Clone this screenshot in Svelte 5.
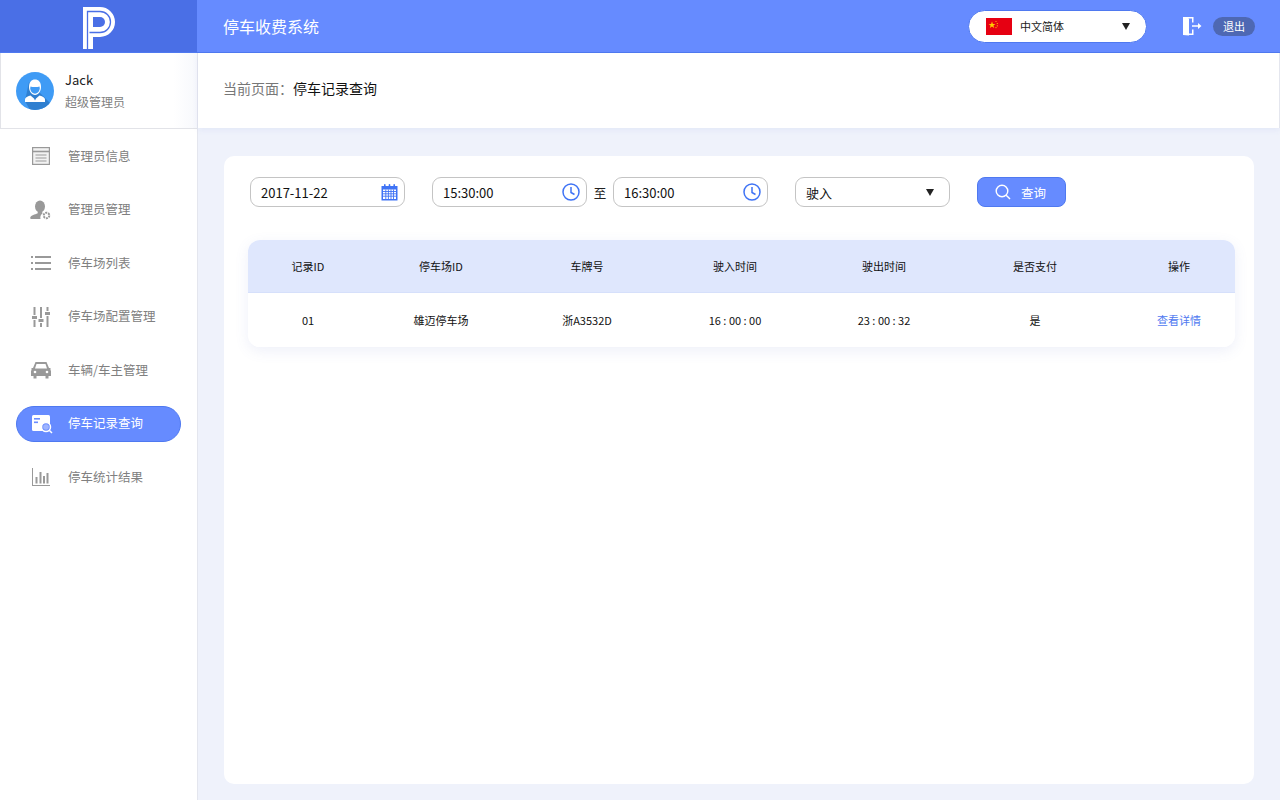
<script>
  const nav = [
    { key: 'info', label: '管理员信息' },
    { key: 'admin', label: '管理员管理' },
    { key: 'list', label: '停车场列表' },
    { key: 'config', label: '停车场配置管理' },
    { key: 'car', label: '车辆/车主管理' },
    { key: 'record', label: '停车记录查询', active: true },
    { key: 'stat', label: '停车统计结果' }
  ];
  const cols = ['记录ID', '停车场ID', '车牌号', '驶入时间', '驶出时间', '是否支付', '操作'];
  const row = ['01', '雄迈停车场', '浙A3532D', '16 : 00 : 00', '23 : 00 : 32', '是'];
</script>

{#snippet clock()}
  <svg class="field-icon" viewBox="0 0 18 18" width="18" height="18" fill="none" stroke="#3f73f5" stroke-width="1.5">
    <circle cx="9" cy="9" r="8"/>
    <path d="M9 4v5.5l3.5 2"/>
  </svg>
{/snippet}

<div class="page">
  <header class="top">
    <div class="logo">
      <svg viewBox="0 0 34 44" width="34" height="44">
        <path d="M1 43V1h17a15 15 0 0 1 0 30H11V43Z" fill="#fff"/>
        <path d="M5.500 43V5.500h12.500a10.500 10.500 0 0 1 0 21H7.500" fill="none" stroke="#4a6fe6" stroke-width="1.300"/>
        <path d="M11 11h7a5 5 0 0 1 0 10h-7Z" fill="#4a6fe6"/>
      </svg>
    </div>
    <div class="bar">
      <h1>停车收费系统</h1>
      <div class="lang">
        <svg class="flag" viewBox="0 0 26 17" width="26" height="17">
          <rect width="26" height="17" fill="#e60012"/>
          <path d="M6 3.500l.9 2.500h2.500l-2 1.500.8 2.500-2.200-1.500-2.200 1.500.8-2.500-2-1.500h2.500Z" fill="#fc0"/>
          <circle cx="10" cy="3.500" r=".6" fill="#fc0"/><circle cx="11.300" cy="5.500" r=".6" fill="#fc0"/>
          <circle cx="11.300" cy="7.800" r=".6" fill="#fc0"/><circle cx="10" cy="9.600" r=".6" fill="#fc0"/>
        </svg>
        <span class="lang-text">中文简体</span>
        <span class="caret"></span>
      </div>
      <svg class="door" viewBox="0 0 20 20" width="20" height="20">
        <path d="M1 1h10.500v5.500h-1.500V2.500H6v15h4V13.500h1.500V19H1Z" fill="#fff"/>
        <path d="M1 1l6 1.500v17L1 19Z" fill="#fff"/>
        <path d="M10 9.300h6V7l3.500 3-3.500 3v-2.300h-6Z" fill="#fff"/>
      </svg>
      <span class="logout">退出</span>
    </div>
  </header>

  <div class="body">
    <aside class="side">
      <div class="user">
        <svg class="avatar" viewBox="0 0 38 38" width="38" height="38">
          <defs><clipPath id="av"><circle cx="19" cy="19" r="19"/></clipPath></defs>
          <circle cx="19" cy="19" r="19" fill="#3f9bf5"/>
          <path d="M13 10l28 28H14L9 29Z" fill="#2f7fd0" clip-path="url(#av)"/>
          <path d="M13 15c0-5 2.500-7.500 6-7.500s6 2.500 6 7.500c0 4-2.500 8-6 8s-6-4-6-8Z" fill="#fff"/>
          <path d="M14.500 14.500c2 .8 7 .8 9 0l.3 2c-.3 3-2.500 5.200-4.800 5.200s-4.500-2.200-4.800-5.200Z" fill="#3f9bf5"/>
          <path d="M9 30v-2.500c0-2 2-3 5.500-4l3.500 3 1 2 1-2 3.500-3c3.500 1 5.500 2 5.500 4V30Z" fill="#fff"/>
        </svg>
        <div class="who">
          <div class="name">Jack</div>
          <div class="role">超级管理员</div>
        </div>
      </div>
      <nav class="nav">
        {#each nav as item}
          <div class="item" class:active={item.active}>
            <span class="icon">
              {#if item.key === 'info'}
                <svg viewBox="0 0 18 18" width="18" height="18" fill="none" stroke="#999" stroke-width="1.200">
                  <rect x=".6" y=".6" width="16.800" height="16.800" fill="#f2f2f2"/>
                  <path d="M.6 4.500h16.800" stroke-width="1.600"/>
                  <path d="M3.500 8h11M3.500 11h11M3.500 14h11"/>
                </svg>
              {:else if item.key === 'admin'}
                <svg viewBox="0 0 22 20" width="22" height="20" fill="#999">
                  <ellipse cx="10" cy="6.500" rx="5" ry="6"/>
                  <path d="M8 11h4l.5 2.500c-1.800 1-2.500 3-2 5.500H1c-.5 0-1-.5-.8-1.200C1 15 5 14.500 7.500 13.500Z"/>
                  <circle cx="16.500" cy="15.500" r="2.800" fill="none" stroke="#999" stroke-width="2" stroke-dasharray="2 .9"/>
                </svg>
              {:else if item.key === 'list'}
                <svg viewBox="0 0 20 14" width="20" height="14" fill="#999">
                  <rect x="0" y="0" width="2" height="2"/><rect x="4" y="0" width="16" height="2"/>
                  <rect x="0" y="6" width="2" height="2"/><rect x="4" y="6" width="16" height="2"/>
                  <rect x="0" y="12" width="2" height="2"/><rect x="4" y="12" width="16" height="2"/>
                </svg>
              {:else if item.key === 'config'}
                <svg viewBox="0 0 18 20" width="18" height="20" fill="#999">
                  <rect x="1.500" y="0" width="2" height="8"/><rect x="0" y="9" width="5" height="3"/><rect x="1.500" y="13" width="2" height="7"/>
                  <rect x="8" y="0" width="2" height="11"/><rect x="6.500" y="12" width="5" height="3"/><rect x="8" y="16" width="2" height="4"/>
                  <rect x="14.500" y="0" width="2" height="4"/><rect x="13" y="5" width="5" height="3"/><rect x="14.500" y="9" width="2" height="11"/>
                </svg>
              {:else if item.key === 'car'}
                <svg viewBox="0 0 20 18" width="20" height="18" fill="#999">
                  <path d="M4.500 1h11L18 7h1.500v2L20 10v5h-2.500v2.500h-3V15h-9v2.500h-3V15H0v-5l.5-1V7H2ZM5.500 3L4 7.500h12L14.500 3Z" fill-rule="evenodd"/>
                  <circle cx="4" cy="11" r="1.300" fill="#fff"/><circle cx="16" cy="11" r="1.300" fill="#fff"/>
                </svg>
              {:else if item.key === 'record'}
                <svg viewBox="0 0 22 20" width="22" height="20">
                  <rect x="1" y="1" width="18" height="16" rx="1.500" fill="#fff"/>
                  <rect x="3" y="4" width="6" height="1.600" fill="#6b8dff"/><rect x="3" y="7.500" width="4" height="1.600" fill="#6b8dff"/>
                  <circle cx="15" cy="13" r="4.500" fill="#6b8dff" stroke="#fff" stroke-width="1.500"/>
                  <circle cx="15" cy="13" r="2.800" fill="#fff" opacity=".35"/>
                  <path d="M18.500 16.500l2.500 2.500" stroke="#fff" stroke-width="1.500"/>
                </svg>
              {:else}
                <svg viewBox="0 0 18 18" width="18" height="18" fill="#999">
                  <path d="M0 0h1v17h17v1H0Z"/>
                  <rect x="3.500" y="9" width="2" height="6.500"/><rect x="7.500" y="4" width="2" height="11.500"/>
                  <rect x="11" y="8" width="2" height="7.500"/><rect x="14.500" y="5" width="2" height="10.500"/>
                </svg>
              {/if}
            </span>
            <span class="label">{item.label}</span>
          </div>
        {/each}
      </nav>
    </aside>

    <main class="main">
      <div class="crumb"><span class="crumb-l">当前页面：</span><span class="crumb-c">停车记录查询</span></div>
      <div class="wrap">
        <section class="card">
          <div class="tools">
            <div class="field w155">
              <span>2017-11-22</span>
              <svg class="field-icon cal" viewBox="0 0 17 18" width="17" height="18">
                <path d="M.5 3h16v14.500H.5Z" fill="#3f73f5"/>
                <rect x="3" y="1" width="1.600" height="3.500" rx=".8" fill="#3f73f5"/><rect x="7.700" y="1" width="1.600" height="3.500" rx=".8" fill="#3f73f5"/><rect x="12.400" y="1" width="1.600" height="3.500" rx=".8" fill="#3f73f5"/>
                <g fill="#fff">
                  <rect x="2" y="6.500" width="13" height="9.500"/>
                </g>
                <path d="M2 8.500h13M2 10.800h13M2 13.200h13M4.800 6.500v9.500M7.400 6.500v9.500M10 6.500v9.500M12.500 6.500v9.500" stroke="#3f73f5" stroke-width=".9"/>
              </svg>
            </div>
            <div class="field w155 ml27"><span>15:30:00</span>{@render clock()}</div>
            <span class="to">至</span>
            <div class="field w155"><span>16:30:00</span>{@render clock()}</div>
            <div class="field w155 ml27"><span>驶入</span><span class="caret sel"></span></div>
            <button class="query">
              <svg viewBox="0 0 16 16" width="16" height="16" fill="none" stroke="#fff" stroke-width="1.400">
                <circle cx="7" cy="7" r="5.800"/><path d="M11.200 11.200l3.800 3.800"/>
              </svg>
              <span>查询</span>
            </button>
          </div>

          <div class="table">
            <div class="tr head">
              {#each cols as c}<div class="td">{c}</div>{/each}
            </div>
            <div class="tr">
              {#each row as c}<div class="td">{c}</div>{/each}
              <div class="td link">查看详情</div>
            </div>
          </div>
        </section>
      </div>
    </main>
  </div>
</div>

<style>
  :global(body) {
    margin: 0;
    font-family: "Noto Sans CJK SC", "Noto Sans", sans-serif;
    background: #fff;
  }
  .page { width: 1280px; height: 800px; display: flex; flex-direction: column; overflow: hidden; }
  .top { height: 53px; flex: none; display: flex; box-sizing: border-box; border-bottom: 1px solid #4f79f0; }
  .logo { width: 197px; flex: none; background: #4a6fe6; display: flex; justify-content: center; padding-top: 6px; box-sizing: border-box; padding-left: 1px; }
  .logo svg { display: block; }
  .bar { flex: 1; background: #668bff; display: flex; align-items: center; padding-left: 26px; }
  h1 { margin: 0; font-size: 16px; font-weight: 400; color: #fff; line-height: 1; width: 745px; flex: none; }
  .lang { width: 179px; height: 33px; box-sizing: border-box; background: #fff; border-radius: 17px; border: 1px solid #4f79f0; display: flex; align-items: center; padding-left: 17px; flex: none; }
  .flag { flex: none; }
  .lang-text { font-size: 11px; color: #222; margin-left: 8px; }
  .caret { width: 0; height: 0; border-left: 4px solid transparent; border-right: 4px solid transparent; border-top: 7px solid #222; margin-left: auto; margin-right: 16px; }
  .door { margin-left: 35px; flex: none; }
  .logout { margin-left: 11px; width: 42px; height: 19px; line-height: 19px; border-radius: 10px; background: #4e68b3; color: #fff; font-size: 11px; text-align: center; flex: none; }

  .body { flex: 1; display: flex; min-height: 0; }
  .side { width: 198px; flex: none; box-sizing: border-box; border-right: 1px solid #e4e6ee; background: #fff; }
  .user { height: 76px; box-sizing: border-box; border: 1px solid #e2e3e8; border-width: 0 0 1px 1px; display: flex; align-items: center; padding-left: 15px; background: linear-gradient(90deg, #fff 88%, #f7f8fc); }
  .avatar { flex: none; }
  .who { margin-left: 11px; }
  .name { font-size: 13px; line-height: 18px; color: #222; }
  .role { font-size: 12px; line-height: 18px; color: #808080; margin-top: 4px; }
  .nav { padding: 9px 16px 0 16px; display: flex; flex-direction: column; gap: 17.500px; }
  .item { height: 36px; width: 165px; box-sizing: border-box; border-radius: 18px; display: flex; align-items: center; color: #808080; font-size: 12.500px; }
  .item.active { background: #668bff; color: #fff; border: 1px solid #4f79f0; margin-left: 0; }
  .icon { width: 52px; flex: none; display: flex; justify-content: center; padding-right: 2px; box-sizing: border-box; }
  .icon svg { display: block; }
  .item.active .icon { width: 51px; }
  .label { line-height: 1; white-space: nowrap; }

  .main { flex: 1; display: flex; flex-direction: column; background: #eff2fb; min-width: 0; }
  .crumb { height: 75px; flex: none; background: #fff; border-right: 1px solid #e4e6ee; box-shadow: 0 2px 6px rgba(90,110,200,.08); display: flex; align-items: center; padding-left: 25px; font-size: 14px; padding-bottom: 6px; box-sizing: border-box; }
  .crumb-l { color: #777; }
  .crumb-c { color: #111; }
  .wrap { flex: 1; padding: 28px 26px 16px 26px; display: flex; min-height: 0; }
  .card { flex: 1; background: #fff; border-radius: 10px; padding: 21px 19px 0 24px; box-sizing: border-box; }
  .tools { display: flex; align-items: center; padding-left: 2px; }
  .field { height: 30px; box-sizing: border-box; border: 1px solid #c4c4c4; border-radius: 9px; display: flex; align-items: center; justify-content: space-between; padding: 0 6px 0 10px; font-size: 13px; color: #111; background: #fff; flex: none; }
  .w155 { width: 155px; }
  .ml27 { margin-left: 27px; }
  .field-icon { flex: none; }
  .cal { margin-right: 0; }
  .to { width: 26px; text-align: center; font-size: 12.500px; color: #222; flex: none; }
  .caret.sel { margin: 0 9px 0 0; }
  .query { margin-left: 27px; width: 89px; height: 30px; box-sizing: border-box; border: 1px solid #4f79f0; border-radius: 8px; background: #668bff; display: flex; align-items: center; padding: 0 0 0 17px; color: #fff; font: 12.500px "Noto Sans CJK SC", sans-serif; flex: none; }
  .query span { margin-left: 10px; }
  .table { margin-top: 33px; width: 987px; border-radius: 12px; box-shadow: 0 4px 14px rgba(90,110,200,.10); overflow: hidden; }
  .tr { display: grid; grid-template-columns: 120px 146px 146px 150px 148px 154px 123px; height: 54px; align-items: center; background: #fff; font-size: 11px; color: #111; }
  .tr.head { height: 53px; background: #dfe7fd; border-bottom: 1px solid #d6e0fb; box-sizing: border-box; }
  .td { text-align: center; line-height: 1; white-space: nowrap; }
  .td:last-child { padding-left: 11px; }
  .link { color: #4f79f0; }
</style>
